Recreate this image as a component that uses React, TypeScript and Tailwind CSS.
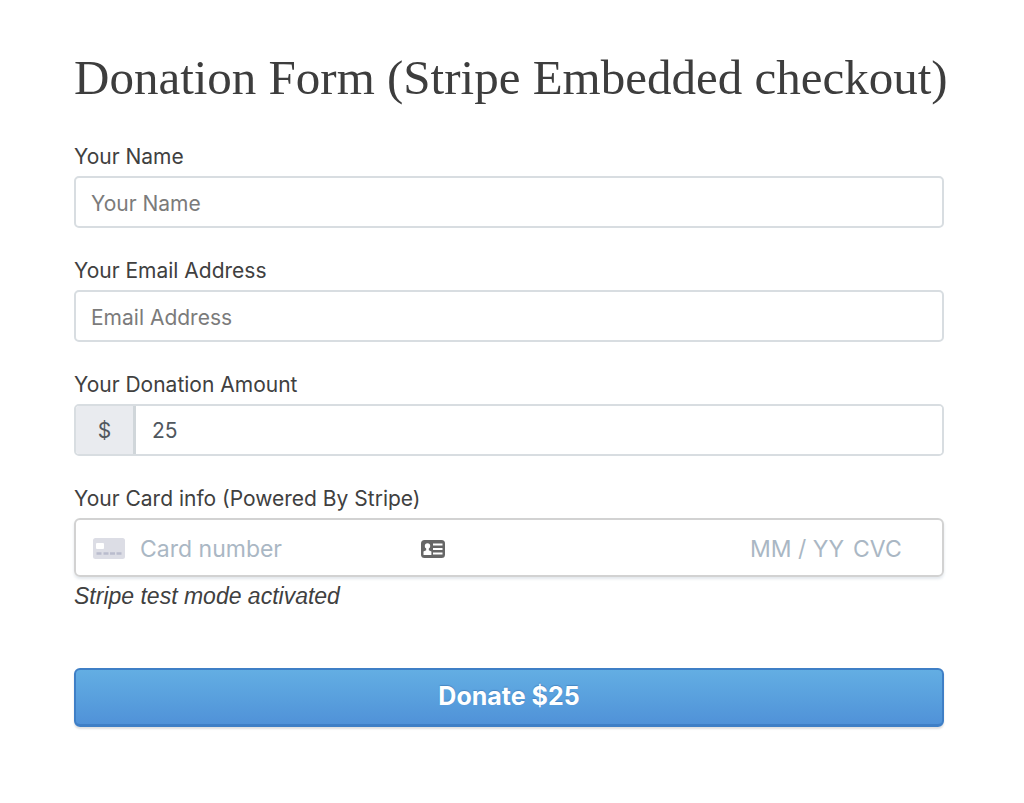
import { FC, ReactNode, useState } from "react";

const CardIcon: FC = () => (
  <svg width="32" height="21" viewBox="0 0 32 21" aria-hidden="true" className="shrink-0">
    <rect width="32" height="21" rx="2.5" fill="#dcdde5" />
    <rect x="3" y="5" width="8" height="6" rx="1" fill="#fff" />
    <path d="M3.5 15.5h5M10.5 15.5h5M17 15.5h5M23.5 15.5h5" stroke="#b9bccd" strokeWidth="2.4" />
  </svg>
);

const ContactIcon: FC = () => (
  <svg width="24" height="18" viewBox="0 0 24 18" aria-hidden="true">
    <rect width="24" height="18" rx="3.5" fill="#666" />
    <circle cx="6.5" cy="6" r="2.7" fill="#fff" />
    <path d="M5.2 8h2.6v2.2l2.6 1.3v3.5H2.5v-3.5l2.7-1.3z" fill="#fff" />
    <path d="M12 4.5h9.5M12 9h9.5M12 13.5h9.5" stroke="#fff" strokeWidth="2" />
  </svg>
);

const Field: FC<{ id: string; label: string; children: ReactNode }> = ({ id, label, children }) => (
  <div className="mb-7 flex flex-col gap-1">
    <label htmlFor={id} className="leading-[30px]">
      {label}
    </label>
    {children}
  </div>
);

const inputClass =
  "h-[52px] w-full min-w-0 rounded-[5px] border-2 border-[#d8dde1] bg-white px-[15px] pt-0.5 text-[#50575e] outline-none placeholder:text-[#7b7b7b]";

const cardInputClass = "min-w-0 bg-transparent pt-0.5 text-[23px] outline-none placeholder:text-[#aab7c4]";

export default function App() {
  const [amount, setAmount] = useState("25");

  return (
    <main className="bg-white pt-[50px] pr-20 pb-[76px] pl-[74px] font-['Inter','Liberation_Sans',sans-serif] text-[21px] text-[#404040]">
      <h1 className="mb-9 font-['Georgia','Liberation_Serif',serif] text-[49px] leading-[56px] whitespace-nowrap text-[#3d3d3d]">
        Donation Form (Stripe Embedded checkout)
      </h1>

      <form onSubmit={(e) => e.preventDefault()}>
        <Field id="name" label="Your Name">
          <input id="name" type="text" placeholder="Your Name" className={inputClass} />
        </Field>

        <Field id="email" label="Your Email Address">
          <input id="email" type="email" placeholder="Email Address" className={inputClass} />
        </Field>

        <Field id="amount" label="Your Donation Amount">
          <div className="flex h-[52px] overflow-hidden rounded-[5px] border-2 border-[#d8dde1]">
            <span className="flex w-[60px] shrink-0 items-center justify-center border-r-3 border-[#d0d6da] bg-[#e9ebef] pt-0.5 text-[#50575e]">
              $
            </span>
            <input
              id="amount"
              type="text"
              inputMode="decimal"
              value={amount}
              onChange={(e) => setAmount(e.target.value)}
              className="w-full min-w-0 bg-white px-4 pt-0.5 text-[#50575e] outline-none"
            />
          </div>
        </Field>

        <div className="mb-14 flex flex-col gap-1">
          <label htmlFor="card-number" className="leading-[30px]">
            Your Card info (Powered By Stripe)
          </label>
          <div className="flex h-[59px] items-center rounded-md border-2 border-[#d2d2d2] pt-0.5 pr-10 pl-[17px] shadow-[0_2px_3px_rgba(207,215,223,0.6)]">
            <CardIcon />
            <input
              id="card-number"
              type="text"
              inputMode="numeric"
              placeholder="Card number"
              className={`${cardInputClass} ml-[15px] w-[281px]`}
            />
            <ContactIcon />
            <input
              type="text"
              aria-label="Expiry date"
              placeholder="MM / YY"
              className={`${cardInputClass} ml-auto w-[103px]`}
            />
            <input type="text" aria-label="CVC" placeholder="CVC" className={`${cardInputClass} w-[49px]`} />
          </div>
          <p className="font-['Liberation_Sans',sans-serif] text-[23px] leading-[31px] italic">
            Stripe test mode activated
          </p>
        </div>

        <button
          type="submit"
          className="h-[59px] w-full rounded-md border-2 border-b-3 border-[#3f7fc6] bg-linear-to-b from-[#63aee3] to-[#5092d8] text-[25px] font-bold text-white shadow-[0_2px_2px_rgba(0,0,0,0.12)] text-shadow-[0_-1px_1px_rgba(40,90,150,0.4)]"
        >
          Donate ${amount}
        </button>
      </form>
    </main>
  );
}
